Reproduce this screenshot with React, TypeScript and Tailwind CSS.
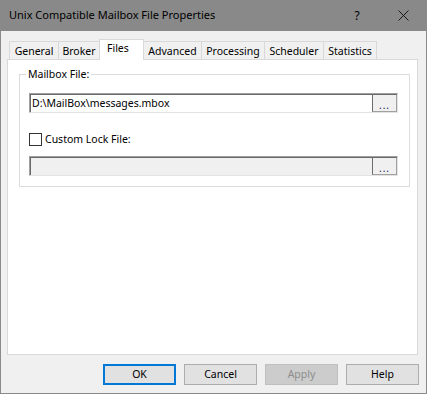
import React from 'react';

const tabs = [
  { label: 'General', w: 'w-[50px]' },
  { label: 'Broker', w: 'w-[42px]' },
  { label: 'Files', w: 'w-[45px]', active: true },
  { label: 'Advanced', w: 'w-[59px]' },
  { label: 'Processing', w: 'w-[64px]' },
  { label: 'Scheduler', w: 'w-[60px]' },
  { label: 'Statistics', w: 'w-[54px]' },
];

const PathField = ({ value, disabled }: { value?: string; disabled?: boolean }) => (
  <div className="w-[369px] h-[20px] border-t border-l border-t-[#a0a0a0] border-l-[#a0a0a0] border-b border-r border-b-[#e3e3e3] border-r-[#e3e3e3]">
    <div
      className={`flex h-full border-t border-l border-t-[#696969] border-l-[#696969] ${
        disabled ? 'bg-[#f0f0f0]' : 'bg-white'
      }`}
    >
      <div className="flex-1 pl-[1px] text-[10.5px] leading-[17px] text-black whitespace-nowrap overflow-hidden">
        {value}
      </div>
      <button className="w-[25px] h-[17px] bg-[#f0f0f0] border-l border-l-[#6d6d6d] border-r border-r-[#a0a0a0] border-b border-b-[#a0a0a0] flex items-end justify-center pb-[2px]">
        <span className="text-[10px] leading-[8px] tracking-[1px] text-[#202060]">...</span>
      </button>
    </div>
  </div>
);

const DialogButton = ({ label, primary, disabled }: { label: string; primary?: boolean; disabled?: boolean }) => (
  <button
    className={`w-[73px] h-[21px] text-[10.5px] leading-none ${
      primary
        ? 'border-2 border-[#0078d7] bg-[#e1e1e1] text-black'
        : disabled
        ? 'border border-[#bfbfbf] bg-[#cccccc] text-[#8d8d8d]'
        : 'border border-[#adadad] bg-[#e1e1e1] text-black'
    }`}
  >
    {label}
  </button>
);

export default function App() {
  return (
    <div className="w-[427px] h-[394px] bg-[#f0f0f0] border-l border-r border-b border-[#8a8a8a] flex flex-col font-['Segoe_UI','Noto_Sans',sans-serif] text-black select-none">
      {/* title bar */}
      <div className="h-[31px] bg-[#898989] flex items-center shrink-0">
        <div className="pl-[8px] flex-1 text-[11px] text-black">Unix Compatible Mailbox File Properties</div>
        <div className="w-[46px] h-full flex items-center justify-center text-[12px] text-black">?</div>
        <div className="w-[46px] h-full flex items-center justify-center">
          <svg width="11" height="11" viewBox="0 0 11 11">
            <path d="M0.5 0.5 L10.5 10.5 M10.5 0.5 L0.5 10.5" stroke="#1a1a1a" strokeWidth="1" />
          </svg>
        </div>
      </div>

      {/* tabs */}
      <div className="mt-[8px] ml-[8px] h-[21px] flex items-end">
        {tabs.map((t, i) =>
          t.active ? (
            <div
              key={t.label}
              className={`${t.w} h-[21px] -ml-px relative z-10 bg-white border border-b-0 border-[#d9d9d9] text-[10.5px] pl-[7px] leading-[17px]`}
            >
              {t.label}
            </div>
          ) : (
            <div
              key={t.label}
              className={`${t.w} h-[19px] ${i > 0 ? '-ml-px' : ''} bg-[#f0f0f0] border border-b-0 border-[#d9d9d9] text-[10.5px] text-center leading-[18px]`}
            >
              {t.label}
            </div>
          )
        )}
      </div>

      {/* panel */}
      <div className="-mt-px ml-[6px] w-[411px] h-[296px] bg-white border border-[#d9d9d9]">
        <div className="relative mt-[14px] ml-[11px] w-[391px] h-[113px] border border-[#dcdcdc]">
          <div className="absolute left-[6px] -top-[9px] px-[2px] bg-white text-[10.5px] leading-[16px]">Mailbox File:</div>
          <div className="mt-[18px] ml-[9px]">
            <PathField value="D:\MailBox\messages.mbox" />
          </div>
          <div className="mt-[20px] ml-[9px] flex items-center h-[13px]">
            <div className="w-[13px] h-[13px] border border-[#333333] bg-white" />
            <span className="ml-[3px] text-[10.5px] leading-[13px]">Custom Lock File:</span>
          </div>
          <div className="mt-[10px] ml-[9px]">
            <PathField disabled />
          </div>
        </div>
      </div>

      {/* buttons */}
      <div className="mt-[9px] pr-[7px] flex justify-end gap-[8px]">
        <DialogButton label="OK" primary />
        <DialogButton label="Cancel" />
        <DialogButton label="Apply" disabled />
        <DialogButton label="Help" />
      </div>
    </div>
  );
}
